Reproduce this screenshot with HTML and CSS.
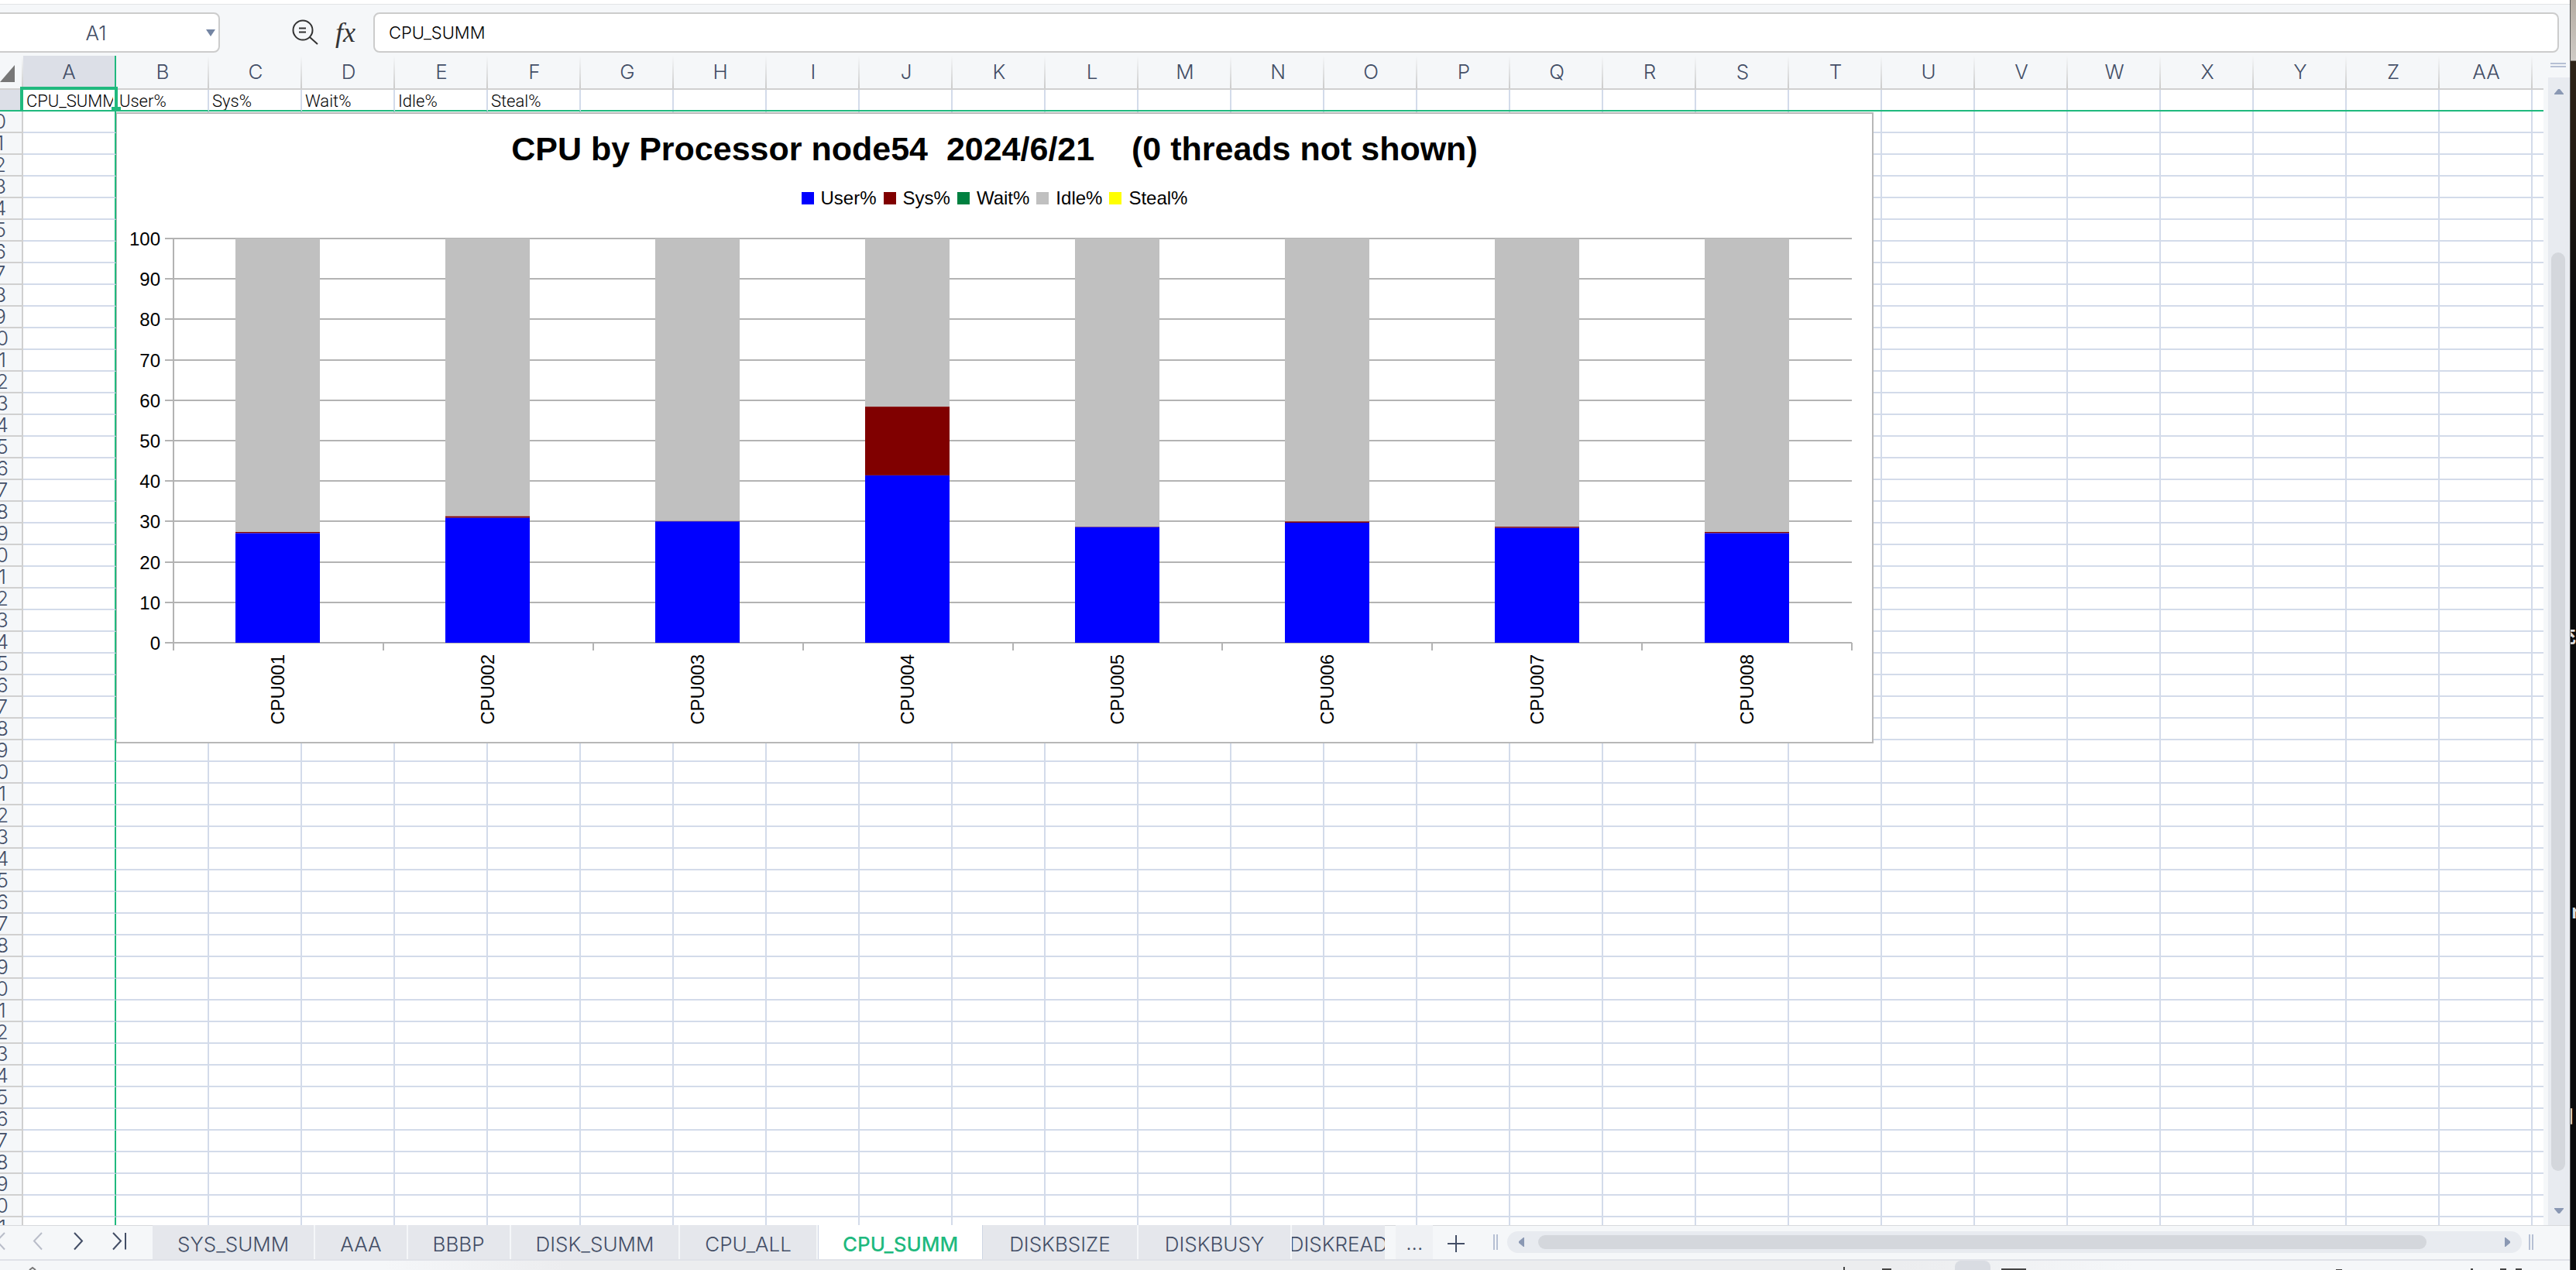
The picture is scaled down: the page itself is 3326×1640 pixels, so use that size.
FILE: index.html
```html
<!DOCTYPE html>
<html lang="en">
<head>
<meta charset="utf-8">
<title>CPU_SUMM</title>
<link rel="stylesheet" href="styles.css">
</head>
<body>
<main class="app">
  <header class="formula-bar">
    <div class="name-box">
      <input class="name-input" aria-label="Name box" value="A1">
      <button class="name-toggle" aria-label="Show names"><svg width="12" height="9" viewBox="0 0 12 9"><path d="M0 0h12L6 9z" fill="#7485a3"/></svg></button>
    </div>
    <div class="formula-tools">
      <button class="tool" aria-label="Browse formula"><svg width="36" height="36" viewBox="0 0 36 36" fill="none" stroke="#333" stroke-width="2"><circle cx="15" cy="15" r="12.5"/><path d="M24 24l10 9M10 12.500h9M10 17.500h9"/></svg></button>
      <button class="tool fx" aria-label="Insert function">fx</button>
    </div>
    <input class="formula-input" aria-label="Formula" value="CPU_SUMM">
  </header>

  <div class="workspace">
    <section class="sheet">
      <table class="grid">
        <colgroup id="columns"></colgroup>
        <thead>
          <tr id="letters"></tr>
          <tr class="frozen">
            <th class="row-head active"></th>
            <td class="cell selected"><span>CPU_SUMM</span></td>
            <td class="cell"><span>User%</span></td>
            <td class="cell"><span>Sys%</span></td>
            <td class="cell"><span>Wait%</span></td>
            <td class="cell"><span>Idle%</span></td>
            <td class="cell"><span>Steal%</span></td>
            <td class="blank" colspan="22"></td>
          </tr>
        </thead>
        <tbody id="rows"></tbody>
      </table>
      <figure class="chart">
        <figcaption class="chart-title">CPU by Processor node54&nbsp; 2024/6/21&nbsp;&nbsp;&nbsp; (0 threads not shown)</figcaption>
        <ul class="legend">
          <li><i class="swatch user"></i>User%</li>
          <li><i class="swatch sys"></i>Sys%</li>
          <li><i class="swatch wait"></i>Wait%</li>
          <li><i class="swatch idle"></i>Idle%</li>
          <li><i class="swatch steal"></i>Steal%</li>
        </ul>
        <svg class="plot" id="plot" viewBox="0 0 2266 686"></svg>
      </figure>
      <div class="selection"></div>
    </section>
    <aside class="vscroll">
      <div class="split-handle"></div>
      <div class="vtrack">
        <button class="arrow" aria-label="Scroll up"><svg width="12" height="7" viewBox="0 0 12 7"><path d="M0 7h12v-1L7 0H5L0 6z" fill="#8a98b3"/></svg></button>
        <div class="vthumb"></div>
        <button class="arrow" aria-label="Scroll down"><svg width="12" height="7" viewBox="0 0 12 7"><path d="M0 0h12v1L7 7H5L0 1z" fill="#8a98b3"/></svg></button>
      </div>
    </aside>
  </div>

  <nav class="tab-bar">
    <div class="tab-nav">
      <svg width="197" height="44" viewBox="0 0 197 44" fill="none" stroke-width="2">
        <path d="M6 10L-4 20.500l10 11M54 10L44 20.500l10 11" stroke="#b9bdc9"/>
        <path d="M96 10l10 10.500-10 11M146 10l10 10.500-10 11M162 10v21.500" stroke="#434e66"/>
      </svg>
    </div>
    <button class="tab">SYS_SUMM</button>
    <button class="tab">AAA</button>
    <button class="tab">BBBP</button>
    <button class="tab">DISK_SUMM</button>
    <button class="tab">CPU_ALL</button>
    <button class="tab current">CPU_SUMM</button>
    <button class="tab">DISKBSIZE</button>
    <button class="tab">DISKBUSY</button>
    <button class="tab cut"><span>DISKREAD</span></button>
    <button class="more" aria-label="More sheets">...</button>
    <button class="add" aria-label="Add sheet"><svg width="24" height="24" viewBox="0 0 24 24" stroke="#434e66" stroke-width="2"><path d="M12 1v22M1 12h22"/></svg></button>
    <i class="grip"></i>
    <div class="htrack">
      <button class="arrow" aria-label="Scroll left"><svg width="7" height="12" viewBox="0 0 7 12"><path d="M7 0v12H6L0 7V5l6-5z" fill="#8a98b3"/></svg></button>
      <div class="hthumb"></div>
      <button class="arrow" aria-label="Scroll right"><svg width="7" height="12" viewBox="0 0 7 12"><path d="M0 0v12h1l6-5V5L1 0z" fill="#8a98b3"/></svg></button>
    </div>
    <i class="grip"></i>
  </nav>
  <footer class="status">
    <svg class="status-left" width="60" height="12" viewBox="0 0 60 12"><path d="M38 12l4-3 4 3" fill="none" stroke="#777" stroke-width="2"/></svg>
    <svg class="status-right" width="940" height="12" viewBox="0 0 940 12">
      <path d="M146 12V8a8 8 0 0 1 8-8h30a8 8 0 0 1 8 8v4z" fill="#d9dce2"/>
      <path d="M2 8h2v4H2zM52 10h12v2H52zM206 10h32v2h-32zM638 11h8v1h-8zM812 10h3v2h-3zM850 10h8v2h-8zM870 10h8v2h-8z" fill="#444"/>
    </svg>
  </footer>
</main>
<div class="desktop">
  <span class="shard first">充</span>
  <span class="shard second">r</span>
  <span class="shard third">自</span>
</div>
<script src="script.js"></script>
</body>
</html>
```
FILE: styles.css
```css
* { box-sizing: border-box; }
body {
  margin: 0;
  height: 100vh;
  display: flex;
  overflow: hidden;
  background: #0b0b0c;
  font-family: Inter, "Liberation Sans", sans-serif;
  font-weight: 300;
  color: #434e66;
}
button, input { font: inherit; color: inherit; border: 0; background: none; padding: 0; margin: 0; }
button { display: flex; align-items: center; justify-content: center; }
svg { display: block; }

.app { flex: 1; min-width: 0; display: flex; flex-direction: column; background: #f5f7f9; }

/* Formula bar */
.formula-bar {
  display: flex;
  align-items: center;
  height: 72px;
  padding: 10px 14px 3px 0;
  border-top: 5px solid #fff;
  box-shadow: inset 0 1px #e2e4e6;
  flex: none;
}
.name-box {
  display: flex;
  align-items: center;
  width: 294px;
  height: 52px;
  margin-left: -10px;
  border: 2px solid #ccc;
  border-radius: 8px;
  background: #fff;
}
.name-input { flex: 1; min-width: 0; text-align: center; font-size: 26px; padding-right: 10px; }
.name-toggle { width: 16px; height: 100%; justify-content: flex-start; }
.formula-tools { display: flex; align-items: center; gap: 18px; margin: 0 20px 0 92px; }
.tool { width: 36px; height: 36px; }
.fx { width: 32px; font: italic 36px/36px "Liberation Serif", serif; color: #333; }
.formula-input {
  flex: 1;
  height: 52px;
  padding: 0 18px;
  border: 2px solid #ccc;
  border-radius: 8px;
  background: #fff;
  color: #000;
  font-size: 22px;
}

/* Sheet */
.workspace { flex: 1; min-height: 0; display: flex; }
.sheet { position: relative; flex: 1; min-width: 0; overflow: hidden; background: #fff; }
.grid { width: 100%; table-layout: fixed; border-collapse: separate; border-spacing: 0; }
.grid th, .grid td { padding: 0; height: 28px; font-weight: 300; line-height: 26px; }
.col-rows { width: 30px; }
.col { width: 120px; }
.letter {
  font-size: 26px;
  border-bottom: 2px solid #d0d0d0;
  background: linear-gradient(#f5f7f9, #ccc) right / 2px 100% no-repeat #f5f7f9;
}
.grid .letter { height: 44px; line-height: 42px; }
.letter.active { background: #dcdfe7; border-right: 2px solid #20b97e; }
.letter.last { background: #f5f7f9; }
.corner svg { margin-top: 4px; }
.row-head {
  overflow: hidden;
  background: #f5f7f9;
  border-right: 2px solid #d0d0d0;
  border-bottom: 2px solid #d0d0d0;
  font-size: 26px;
}
.row-head span { display: block; width: 70px; margin-left: -40px; text-align: center; }
.row-head.active { background: #dcdfe7; }
.cell {
  border-right: 2px solid #d3dbea;
  border-bottom: 2px solid #d3dbea;
  font: 300 22px/26px Roboto, sans-serif;
  color: #000;
}
.cell span { display: block; height: 26px; padding: 2px 0 0 4px; overflow: hidden; white-space: nowrap; }
.selected span { width: 116px; }
.blank {
  border-bottom: 2px solid #d3dbea;
  background: repeating-linear-gradient(to right, transparent 0 118px, #d3dbea 118px 120px);
}
.col-a { border-right: 2px solid #20b97e; border-bottom: 2px solid #d3dbea; }
.frozen th, .frozen td { border-bottom-color: #20b97e; }
.selected { border-right-color: #20b97e; }
.selection {
  position: absolute;
  left: 26px;
  top: 40px;
  width: 126px;
  height: 32px;
  border: 4px solid #20b97e;
  border-bottom-width: 2px;
}
.selection::after {
  content: "";
  position: absolute;
  right: -8px;
  bottom: -2px;
  width: 12px;
  height: 6px;
  background: #20b97e;
}

/* Chart */
.chart {
  position: absolute;
  left: 150px;
  top: 73px;
  width: 2269px;
  margin: 0;
  padding-top: 21px;
  border: solid #b8b8b8;
  border-width: 2px 2px 2px 1px;
  background: #fff;
  font-family: "Liberation Sans", Arial, sans-serif;
  font-weight: 400;
  color: #000;
}
.chart-title { text-align: center; font-size: 43px; font-weight: 700; line-height: 48px; }
.legend {
  display: flex;
  justify-content: center;
  gap: 9px;
  margin: 28px 0 4px;
  padding: 0;
  list-style: none;
  font-size: 24px;
  line-height: 24px;
}
.legend li { display: flex; align-items: center; gap: 9px; }
.swatch { width: 16px; height: 16px; }
.user { background: #00f; }
.sys { background: #800000; }
.wait { background: #008040; }
.idle { background: #c0c0c0; }
.steal { background: #ff0; }
.plot { width: 100%; font-size: 24px; }
.bar-user { fill: #00f; }
.bar-sys { fill: #800000; }
.bar-idle { fill: #c0c0c0; }
.axis { fill: none; stroke: #b3b3b3; stroke-width: 2; }

/* Vertical scroll bar */
.vscroll { width: 34px; flex: none; display: flex; flex-direction: column; }
.split-handle { width: 20px; height: 6px; margin: 9px 0 13px 9px; border: solid #b6c0d4; border-width: 2px 0; }
.vtrack {
  flex: 1;
  display: flex;
  flex-direction: column;
  align-items: center;
  padding: 15px 0;
  border-left: 6px solid #f5f7f9;
  background: #e8ebf0;
}
.vthumb { flex: 1; width: 18px; margin: 204px 2px 48px 0; border-radius: 9px; background: #d4d7dc; }

/* Sheet tabs */
.tab-bar {
  display: flex;
  align-items: center;
  height: 46px;
  flex: none;
  border-bottom: 2px solid #e0e2e8;
  background: #f5f7f9;
  box-shadow: inset 0 1px #d8dadd;
}
.tab-nav { flex: none; }
.tab {
  flex: none;
  height: 44px;
  padding: 4px 32px 0;
  border-right: 2px solid #f5f7f9;
  background: #e5e7ec;
  font-size: 26px;
}
.tab.current {
  padding: 4px 32px 0;
  border: 0;
  background: #fff;
  box-shadow: inset 1px 0 #cfd6e4, inset -1px 0 #cfd6e4;
  color: #20b97e;
  font-weight: 500;
}
.current ~ .tab { padding: 4px 34px 0; }
.current ~ .cut { width: 120px; overflow: hidden; padding: 4px 0 0; border: 0; }
.more { width: 48px; height: 44px; margin-left: 14px; font-size: 26px; background: #eff1f4; }
.add { margin: 4px 36px 0 18px; }
.grip { width: 6px; height: 20px; flex: none; border: solid #b6c0d4; border-width: 0 2px; }
.htrack {
  flex: 1;
  display: flex;
  align-items: center;
  height: 28px;
  margin: 0 9px 0 12px;
  padding: 0 15px;
  border-radius: 14px;
  background: #e8ebf0;
}
.hthumb { flex: 1; height: 18px; margin: 0 101px 0 18px; border-radius: 9px; background: #d4d7dc; }
.tab-bar > .grip:last-child { margin-right: 47px; }

.status {
  display: flex;
  justify-content: space-between;
  height: 12px;
  flex: none;
  background: linear-gradient(to right, #f5f7f9 15%, #ecedef 22% 74%, #f5f7f9 83%);
}

/* Desktop showing beside the window */
.desktop {
  position: relative;
  width: 8px;
  flex: none;
  overflow: hidden;
  border-left: 1px solid #555;
  background: linear-gradient(#b5aca2, #cfcbc6 78px, #2e2317 79px, #221a12 220px, #0b0b0c 400px);
}
.shard { position: absolute; font: 700 24px/24px "Noto Sans CJK SC", sans-serif; color: #ddd; }
.first { right: 0; top: 808px; }
.second { left: 1px; top: 1164px; }
.third { right: 2px; top: 1427px; }
```
FILE: script.js
```js
const letters = [...'ABCDEFGHIJKLMNOPQRSTUVWXYZ', 'AA'];
const byId = (id) => document.getElementById(id);

byId('columns').innerHTML =
  '<col class="col-rows">' + '<col class="col">'.repeat(letters.length) + '<col>';

byId('letters').innerHTML =
  '<th class="letter corner"><svg width="19" height="22" viewBox="0 0 19 22"><path d="M19 0v22H0z" fill="#777"/></svg></th>' +
  letters.map((l, i) => `<th class="letter${i ? '' : ' active'}">${l}</th>`).join('') +
  '<th class="letter last"></th>';

// Rows below the frozen first row.
let rows = '';
for (let n = 10; n <= 61; n++) {
  rows += `<tr><th class="row-head"><span>${n}</span></th><td class="col-a"></td><td class="blank" colspan="27"></td></tr>`;
}
byId('rows').innerHTML = rows;

// Stacked bars: user and sys in percent, idle fills the rest.
const cpus = [
  ['CPU001', 27.1, 0.3], ['CPU002', 30.9, 0.4], ['CPU003', 30, 0.1], ['CPU004', 41.4, 17],
  ['CPU005', 28.6, 0.1], ['CPU006', 29.7, 0.3], ['CPU007', 28.4, 0.3], ['CPU008', 27.1, 0.3],
];
const left = 73, right = 2240, top100 = 36, base = 558;
const y = (v) => base - (v * (base - top100)) / 100;
const step = (right - left) / cpus.length;
const rect = (cls, x, from, to) =>
  `<rect class="bar-${cls}" x="${x}" y="${y(to)}" width="109" height="${y(from) - y(to)}"/>`;

let plot = '', lines = '';
for (let v = 0; v <= 100; v += 10) {
  lines += `M${left - 11} ${Math.round(y(v))}H${right}`;
  plot += `<text x="56" y="${y(v) + 9}" text-anchor="end">${v}</text>`;
}
lines += `M${left} ${top100}V${base}`;
for (let i = 0; i <= cpus.length; i++) lines += `M${Math.round(left + i * step)} ${base}v10`;
plot += `<path class="axis" d="${lines}"/>`;
cpus.forEach(([name, user, sys], i) => {
  const mid = Math.round(left + (i + 0.5) * step);
  const x = mid - 55;
  plot += rect('idle', x, user + sys, 100) + rect('sys', x, user, user + sys) + rect('user', x, 0, user);
  plot += `<text transform="translate(${mid + 8} 573) rotate(-90)" text-anchor="end">${name}</text>`;
});
byId('plot').innerHTML = plot;
```
